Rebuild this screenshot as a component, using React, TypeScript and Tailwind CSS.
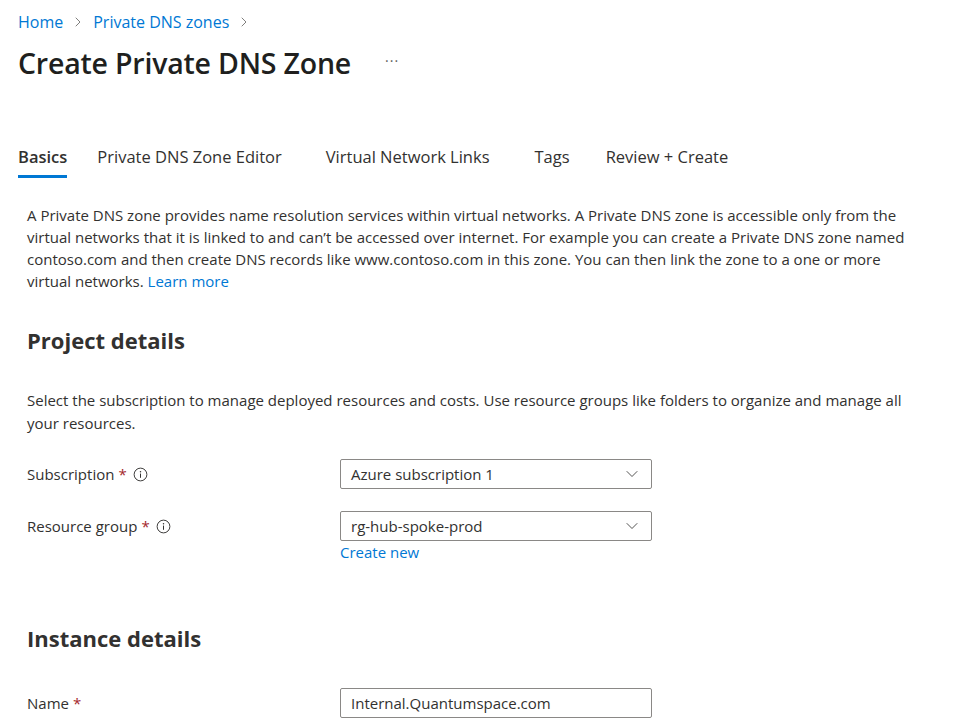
import { ChevronRight, ChevronDown } from "lucide-react";

const font = { fontFamily: '"Open Sans", "Noto Sans", sans-serif' };

function InfoIcon() {
    return (
        <svg width="15" height="15" viewBox="0 0 16 16" fill="none" className="ml-1.5">
            <circle cx="8" cy="8" r="6.8" stroke="#323130" strokeWidth="1" />
            <circle cx="8" cy="5" r="0.8" fill="#323130" />
            <path d="M8 7v4.5" stroke="#323130" strokeWidth="1.1" />
        </svg>
    );
}

function Label({ text, info }: { text: string; info?: boolean }) {
    return (
        <div className="flex items-center w-[313px] shrink-0 text-[15px] text-[#323130]">
            <span>{text}</span>
            <span className="text-[#a4262c] ml-1">*</span>
            {info && <InfoIcon />}
        </div>
    );
}

function Select({ value }: { value: string }) {
    return (
        <div className="flex items-center justify-between w-[312px] h-[30px] border border-[#8a8886] rounded-[2px] px-[10px] text-[15px] text-[#323130]">
            <span>{value}</span>
            <ChevronDown size={20} strokeWidth={1} className="text-[#323130] mr-[-1px]" />
        </div>
    );
}

const tabs = [
    { label: "Basics", gap: "mr-[30px]" },
    { label: "Private DNS Zone Editor", gap: "mr-[44px]" },
    { label: "Virtual Network Links", gap: "mr-[45px]" },
    { label: "Tags", gap: "mr-[36px]" },
    { label: "Review + Create", gap: "" },
];

export default function App() {
    return (
        <div className="bg-white min-h-screen w-[977px] h-[727px] overflow-hidden text-[#323130]" style={font}>
            <div className="pl-[18px] pt-[10px]">
                {/* breadcrumb */}
                <div className="flex items-center text-[16px] text-[#0078d4] h-[24px]">
                    <span>Home</span>
                    <ChevronRight size={16} strokeWidth={1.2} className="text-[#605e5c] mx-[7px]" />
                    <span>Private DNS zones</span>
                    <ChevronRight size={16} strokeWidth={1.2} className="text-[#605e5c] mx-[7px]" />
                </div>

                {/* title */}
                <div className="flex items-center mt-[9px] h-[40px]">
                    <h1 className="text-[28.5px] font-semibold text-[#201f1e] tracking-[-0.2px]">Create Private DNS Zone</h1>
                    <span className="ml-[34px] text-[14px] text-[#605e5c] tracking-[1px] pb-[6px]">···</span>
                </div>

                {/* tabs */}
                <div className="flex items-end mt-[62px] text-[16.5px]">
                    {tabs.map((t, i) => (
                        <div
                            key={t.label}
                            className={
                                i === 0
                                    ? "flex flex-col items-stretch font-semibold " + t.gap
                                    : "flex flex-col items-stretch " + t.gap
                            }
                        >
                            <span className="h-[24px] leading-[24px]">{t.label}</span>
                            <span className={i === 0 ? "h-[3px] bg-[#0078d4] mt-[6px]" : "h-[3px] mt-[6px]"}></span>
                        </div>
                    ))}
                </div>
            </div>

            <div className="pl-[27px] pr-[40px]">
                <p className="mt-[26px] text-[15px] leading-[22px] w-[882px]">
                    A Private DNS zone provides name resolution services within virtual networks. A Private DNS zone is accessible only from the virtual networks that it is linked to and can’t be accessed over internet. For example you can create a Private DNS zone named contoso.com and then create DNS records like www.contoso.com in this zone. You can then link the zone to a one or more virtual networks.{" "}
                    <span className="text-[#0078d4]">Learn more</span>
                </p>

                <h2 className="mt-[32px] text-[22px] font-bold text-[#323130] h-[32px] leading-[32px]">Project details</h2>

                <p className="mt-[33px] text-[15px] leading-[23px] w-[910px]">
                    Select the subscription to manage deployed resources and costs. Use resource groups like folders to organize and manage all your resources.
                </p>

                <div className="flex items-center mt-[24px]">
                    <Label text="Subscription" info />
                    <Select value="Azure subscription 1" />
                </div>

                <div className="flex items-center mt-[22px]">
                    <Label text="Resource group" info />
                    <Select value="rg-hub-spoke-prod" />
                </div>
                <div className="pl-[313px] text-[15px] text-[#0078d4] leading-[22px]">Create new</div>

                <h2 className="mt-[59px] text-[22px] font-bold text-[#323130] h-[32px] leading-[32px]">Instance details</h2>

                <div className="flex items-center mt-[34px]">
                    <Label text="Name" />
                    <div className="flex items-center w-[312px] h-[30px] border border-[#8a8886] rounded-[2px] px-[10px] text-[15px] text-[#323130]">
                        Internal.Quantumspace.com
                    </div>
                </div>
            </div>
        </div>
    );
}
